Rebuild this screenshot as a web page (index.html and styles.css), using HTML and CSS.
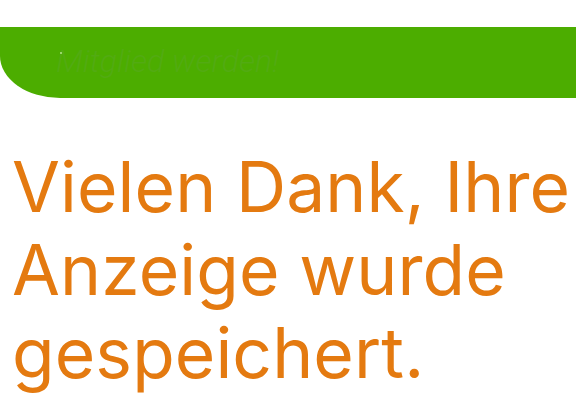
FILE: index.html
```html
<!DOCTYPE html>
<html lang="de">
<head>
<meta charset="utf-8">
<link rel="stylesheet" href="styles.css">
</head>
<body>
<div class="page">
  <div class="banner">
    <span class="banner-text">Mitglied werden!</span>
  </div>
  <h1 class="headline">Vielen Dank, Ihre Anzeige wurde gespeichert.</h1>
</div>
</body>
</html>
```

FILE: styles.css
```css
html, body {
  margin: 0;
  padding: 0;
  background: #ffffff;
}
.page {
  width: 576px;
  height: 418px;
  overflow: hidden;
  padding-top: 27px;
  box-sizing: border-box;
}
.banner {
  height: 71px;
  background: #4cad00;
  border-bottom-left-radius: 60px 42px;
  padding-left: 56px;
  box-sizing: border-box;
  display: flex;
  align-items: flex-start;
}
.banner-text {
  position: relative;
  font-family: Roboto, "Liberation Sans", sans-serif;
  font-style: italic;
  font-weight: 300;
  font-size: 32px;
  line-height: 32px;
  margin-top: 18px;
  color: #52ab12;
  white-space: nowrap;
}
.banner-text::before {
  content: "";
  position: absolute;
  left: 4px;
  top: 7px;
  width: 2px;
  height: 2px;
  border-radius: 1px;
  background: #b5e48a;
}
.headline {
  margin: 0;
  padding: 48px 0 0 12px;
  font-family: Inter, sans-serif;
  font-weight: 400;
  font-size: 69.5px;
  letter-spacing: 0.1px;
  line-height: 83px;
  color: #e47a10;
  width: 570px;
}
```
